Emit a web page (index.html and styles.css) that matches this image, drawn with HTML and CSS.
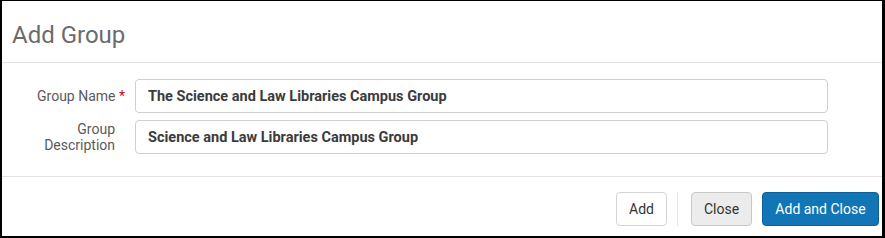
FILE: index.html
```html
<!DOCTYPE html>
<html>
<head>
<meta charset="utf-8">
<link rel="stylesheet" href="styles.css">
</head>
<body>
<div class="dialog">
  <div class="dialog-header">
    <h1 class="dialog-title">Add Group</h1>
  </div>
  <div class="dialog-body">
    <div class="form-row">
      <label class="form-label">Group Name <span class="req">*</span></label>
      <div class="form-input">The Science and Law Libraries Campus Group</div>
    </div>
    <div class="form-row">
      <label class="form-label form-label-pad">Group<br>Description</label>
      <div class="form-input">Science and Law Libraries Campus Group</div>
    </div>
  </div>
  <div class="dialog-footer">
    <button class="btn btn-default">Add</button>
    <span class="btn-divider"></span>
    <button class="btn btn-gray">Close</button>
    <button class="btn btn-primary">Add and Close</button>
  </div>
</div>
</body>
</html>
```
FILE: styles.css
```css
html, body {
  margin: 0;
  padding: 0;
  background: #000;
}
body {
  font-family: Roboto, "Liberation Sans", sans-serif;
}
.dialog {
  box-sizing: border-box;
  width: 885px;
  height: 238px;
  border-style: solid;
  border-color: #000;
  border-width: 1px 3px 2px 2px;
  background: #fff;
  display: flex;
  flex-direction: column;
}
.dialog-header {
  height: 61px;
  border-bottom: 1px solid #e2e2e2;
  display: flex;
  align-items: center;
  padding-left: 10px;
}
.dialog-title {
  margin: 0;
  font-weight: 400;
  font-size: 24px;
  color: #6b6b6b;
  padding-top: 6px;
}
.dialog-body {
  height: 114px;
  box-sizing: border-box;
  padding-top: 16px;
  display: flex;
  flex-direction: column;
  gap: 7px;
  border-bottom: 1px solid #e2e2e2;
}
.form-row {
  display: flex;
  align-items: center;
}
.form-label {
  width: 123px;
  box-sizing: border-box;
  text-align: right;
  font-size: 14px;
  line-height: 16px;
  color: #5a5a5a;
  margin-right: 10px;
}
.form-label-pad {
  padding-right: 10px;
}
.req {
  color: #d0021b;
}
.form-input {
  width: 693px;
  height: 34px;
  box-sizing: border-box;
  border: 1px solid #cfcfcf;
  border-radius: 4px;
  padding-left: 12px;
  display: flex;
  align-items: center;
  font-size: 14.5px;
  font-weight: 700;
  color: #3b3b3b;
}
.dialog-footer {
  flex: 1;
  display: flex;
  justify-content: flex-end;
  align-items: flex-start;
  padding-top: 15px;
  padding-right: 3px;
}
.btn {
  box-sizing: border-box;
  height: 34px;
  border: 1px solid #d4d4d4;
  border-radius: 4px;
  font-family: Roboto, "Liberation Sans", sans-serif;
  font-size: 14px;
  padding: 0 12px;
  background: #fff;
  color: #333;
}
.btn-default {
  width: 51px;
}
.btn-divider {
  width: 1px;
  height: 34px;
  background: #e6e6e6;
  margin: 0 13px 0 10px;
}
.btn-gray {
  width: 61px;
  background: #ececec;
  border-color: #c8c8c8;
  margin-right: 10px;
}
.btn-primary {
  width: 117px;
  background: #1275b6;
  border-color: #0e5f96;
  color: #fff;
}
```
